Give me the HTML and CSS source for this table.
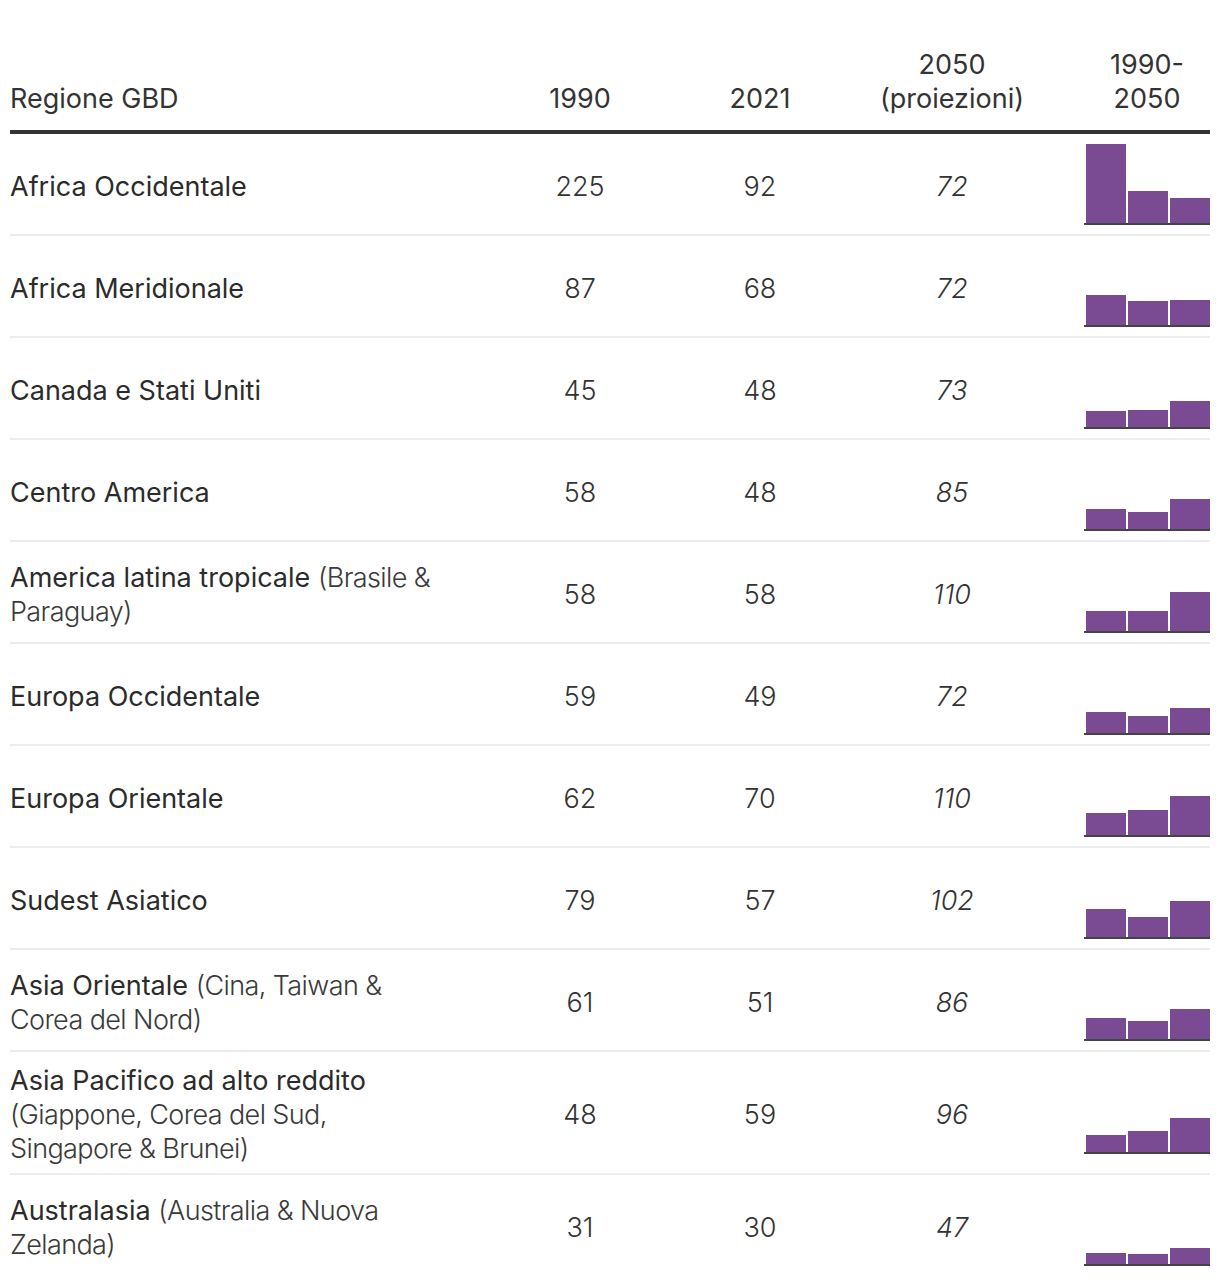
FILE: index.html
```html
<!DOCTYPE html>
<html lang="it">
<head>
<meta charset="utf-8">
<title>Regioni GBD</title>
<link rel="stylesheet" href="styles.css">
</head>
<body>
<table class="data">
  <colgroup>
    <col class="c-region">
    <col class="c-num">
    <col class="c-num">
    <col class="c-proj">
    <col class="c-chart">
  </colgroup>
  <thead>
    <tr>
      <th class="region">Regione GBD</th>
      <th>1990</th>
      <th>2021</th>
      <th class="proj">2050<br>(proiezioni)</th>
      <th class="charthead">1990-<br>2050</th>
    </tr>
  </thead>
  <tbody>
    <tr>
      <td class="region">Africa Occidentale</td>
      <td class="num">225</td><td class="num">92</td><td class="num proj">72</td>
      <td class="chartcell"><div class="chart"><span class="bar" style="height:79px"></span><span class="bar" style="height:32.3px"></span><span class="bar" style="height:25.3px"></span></div></td>
    </tr>
    <tr>
      <td class="region">Africa Meridionale</td>
      <td class="num">87</td><td class="num">68</td><td class="num proj">72</td>
      <td class="chartcell"><div class="chart"><span class="bar" style="height:30.5px"></span><span class="bar" style="height:23.9px"></span><span class="bar" style="height:25.3px"></span></div></td>
    </tr>
    <tr>
      <td class="region">Canada e Stati Uniti</td>
      <td class="num">45</td><td class="num">48</td><td class="num proj">73</td>
      <td class="chartcell"><div class="chart"><span class="bar" style="height:15.8px"></span><span class="bar" style="height:16.8px"></span><span class="bar" style="height:25.6px"></span></div></td>
    </tr>
    <tr>
      <td class="region">Centro America</td>
      <td class="num">58</td><td class="num">48</td><td class="num proj">85</td>
      <td class="chartcell"><div class="chart"><span class="bar" style="height:20.4px"></span><span class="bar" style="height:16.8px"></span><span class="bar" style="height:29.8px"></span></div></td>
    </tr>
    <tr>
      <td class="region">America latina tropicale <span class="note">(Brasile &amp; Paraguay)</span></td>
      <td class="num">58</td><td class="num">58</td><td class="num proj">110</td>
      <td class="chartcell"><div class="chart"><span class="bar" style="height:20.4px"></span><span class="bar" style="height:20.4px"></span><span class="bar" style="height:38.6px"></span></div></td>
    </tr>
    <tr>
      <td class="region">Europa Occidentale</td>
      <td class="num">59</td><td class="num">49</td><td class="num proj">72</td>
      <td class="chartcell"><div class="chart"><span class="bar" style="height:20.7px"></span><span class="bar" style="height:17.2px"></span><span class="bar" style="height:25.3px"></span></div></td>
    </tr>
    <tr>
      <td class="region">Europa Orientale</td>
      <td class="num">62</td><td class="num">70</td><td class="num proj">110</td>
      <td class="chartcell"><div class="chart"><span class="bar" style="height:21.8px"></span><span class="bar" style="height:24.6px"></span><span class="bar" style="height:38.6px"></span></div></td>
    </tr>
    <tr>
      <td class="region">Sudest Asiatico</td>
      <td class="num">79</td><td class="num">57</td><td class="num proj">102</td>
      <td class="chartcell"><div class="chart"><span class="bar" style="height:27.7px"></span><span class="bar" style="height:20px"></span><span class="bar" style="height:35.8px"></span></div></td>
    </tr>
    <tr>
      <td class="region">Asia Orientale <span class="note">(Cina, Taiwan &amp; Corea del Nord)</span></td>
      <td class="num">61</td><td class="num">51</td><td class="num proj">86</td>
      <td class="chartcell"><div class="chart"><span class="bar" style="height:21.4px"></span><span class="bar" style="height:17.9px"></span><span class="bar" style="height:30.2px"></span></div></td>
    </tr>
    <tr>
      <td class="region">Asia Pacifico ad alto reddito <span class="note">(Giappone, Corea del Sud, Singapore &amp; Brunei)</span></td>
      <td class="num">48</td><td class="num">59</td><td class="num proj">96</td>
      <td class="chartcell"><div class="chart"><span class="bar" style="height:16.8px"></span><span class="bar" style="height:20.7px"></span><span class="bar" style="height:33.7px"></span></div></td>
    </tr>
    <tr>
      <td class="region">Australasia <span class="note">(Australia &amp; Nuova Zelanda)</span></td>
      <td class="num">31</td><td class="num">30</td><td class="num proj">47</td>
      <td class="chartcell"><div class="chart"><span class="bar" style="height:10.9px"></span><span class="bar" style="height:10.5px"></span><span class="bar" style="height:16.5px"></span></div></td>
    </tr>
  </tbody>
</table>
</body>
</html>
```

FILE: styles.css
```css
html, body {
  margin: 0;
  padding: 0;
  background: #fff;
}

body {
  padding: 38px 10px 0;
  font-family: Inter, "Liberation Sans", sans-serif;
  font-size: 27px;
  line-height: 34px;
  color: #333;
}

.data {
  width: 1200px;
  table-layout: fixed;
  border-collapse: collapse;
  border-spacing: 0;
}

.c-region { width: 480px; }
.c-num { width: 180px; }
.c-proj { width: 234px; }
.c-chart { width: 126px; }

.data th {
  font-weight: 370;
  text-align: center;
  vertical-align: bottom;
  padding: 10px 0 14px;
  border-bottom: 4px solid #333;
}

.data th.region {
  text-align: left;
}

.data th.proj {
  padding-right: 30px;
}

.data td {
  padding: 12px 0 7px;
  vertical-align: middle;
  border-bottom: 2px solid #ededed;
}

.data td.chartcell {
  padding: 10px 0 9px;
}

.data tbody tr:last-child td {
  border-bottom: none;
}

.data td.region {
  padding-right: 45px;
  color: #2b2b2b;
  font-weight: 370;
}

.note {
  font-weight: 300;
  color: #3a3a3a;
  letter-spacing: -0.6px;
}

.data td.num {
  text-align: center;
  font-weight: 300;
  color: #333;
}

.data td.proj {
  font-style: italic;
  padding-right: 30px;
}

.chart {
  display: flex;
  align-items: flex-end;
  gap: 2px;
  height: 81px;
  box-sizing: border-box;
  padding-left: 2px;
  border-bottom: 2px solid #444;
}

.bar {
  display: block;
  width: 40px;
  background: #7a4b93;
}
```
